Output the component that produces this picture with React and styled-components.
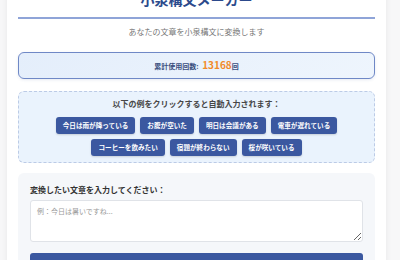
import React from "react";
import styled, { createGlobalStyle } from "styled-components";

const Global = createGlobalStyle`
  html, body { margin: 0; padding: 0; background: #f7f7f8; overflow: hidden; }
  body { font-family: "Noto Sans CJK JP", "Noto Sans", sans-serif; }
`;

const Container = styled.div`
  width: 379px;
  margin: -11px 0 0 7px;
  background: #ffffff;
  box-shadow: 0 0 6px rgba(0, 0, 0, 0.07);
  padding: 0 11px 20px;
  box-sizing: border-box;
`;

const Title = styled.h1`
  margin: 0;
  font-size: 14px;
  line-height: 20px;
  font-weight: 700;
  color: #2c4a8c;
  text-align: center;
  padding-bottom: 8px;
  border-bottom: 2px solid #8fa4d8;
`;

const Subtitle = styled.p`
  margin: 7px 0 0;
  font-size: 8px;
  line-height: 12px;
  color: #777;
  text-align: center;
`;

const Counter = styled.div`
  margin-top: 14px;
  border: 1.5px solid #6f88c6;
  border-radius: 6px;
  background: linear-gradient(135deg, #e4eefb 0%, #eef5fd 100%);
  padding: 5px 0;
  line-height: 13px;
  text-align: center;
  font-size: 7px;
  font-weight: 700;
  color: #3a4f7f;
  box-shadow: 0 1px 3px rgba(60, 90, 160, 0.12);
`;

const Count = styled.span`
  font-size: 10px;
  color: #f28a2a;
  margin-left: 2px;
`;

const Examples = styled.div`
  margin-top: 12px;
  border: 1px dashed #bccbe6;
  border-radius: 6px;
  background: #eaf3fd;
  padding: 6px 10px 6px;
`;

const ExamplesHeading = styled.div`
  font-size: 8px;
  line-height: 12px;
  font-weight: 700;
  color: #474747;
  text-align: center;
`;

const ButtonWrap = styled.div`
  margin-top: 7px;
  display: flex;
  flex-wrap: wrap;
  justify-content: center;
  gap: 5px;
`;

const ExampleButton = styled.button`
  height: 17px;
  padding: 0 7px;
  border: none;
  border-radius: 3px;
  background: #3b58a0;
  color: #ffffff;
  font-family: inherit;
  font-size: 6.6px;
  font-weight: 700;
  line-height: 17px;
  white-space: nowrap;
  box-shadow: 0 1px 2px rgba(0, 0, 0, 0.15);
  cursor: pointer;
`;

const InputSection = styled.div`
  margin-top: 10px;
  background: #f5f7fa;
  border-radius: 6px;
  padding: 11px 12px 12px;
`;

const Label = styled.label`
  display: block;
  font-size: 8px;
  line-height: 12px;
  font-weight: 700;
  color: #333;
`;

const TextArea = styled.textarea`
  display: block;
  margin-top: 4px;
  width: 100%;
  height: 42px;
  box-sizing: border-box;
  border: 1px solid #e0e3e8;
  border-radius: 3px;
  background: #fff;
  padding: 5px 6px;
  font-family: inherit;
  font-size: 7px;
  line-height: 11px;
  color: #333;
  resize: vertical;
  &::placeholder { color: #9a9a9a; }
`;

const ConvertButton = styled.button`
  display: block;
  margin-top: 11px;
  width: 100%;
  height: 38px;
  border: none;
  border-radius: 3px;
  background: #3b58a0;
  color: #fff;
  font-family: inherit;
  font-size: 9px;
  font-weight: 700;
`;

const examples = [
  "今日は雨が降っている",
  "お腹が空いた",
  "明日は会議がある",
  "電車が遅れている",
  "コーヒーを飲みたい",
  "宿題が終わらない",
  "桜が咲いている",
];

export default function App() {
  const [text, setText] = React.useState("");
  return (
    <>
      <Global />
      <Container>
        <Title>小泉構文メーカー</Title>
        <Subtitle>あなたの文章を小泉構文に変換します</Subtitle>
        <Counter>
          累計使用回数: <Count>13168</Count>回
        </Counter>
        <Examples>
          <ExamplesHeading>以下の例をクリックすると自動入力されます：</ExamplesHeading>
          <ButtonWrap>
            {examples.map((e) => (
              <ExampleButton key={e} onClick={() => setText(e)}>
                {e}
              </ExampleButton>
            ))}
          </ButtonWrap>
        </Examples>
        <InputSection>
          <Label>変換したい文章を入力してください：</Label>
          <TextArea
            placeholder="例：今日は暑いですね..."
            value={text}
            onChange={(ev) => setText(ev.target.value)}
          />
          <ConvertButton>小泉構文に変換</ConvertButton>
        </InputSection>
      </Container>
    </>
  );
}
